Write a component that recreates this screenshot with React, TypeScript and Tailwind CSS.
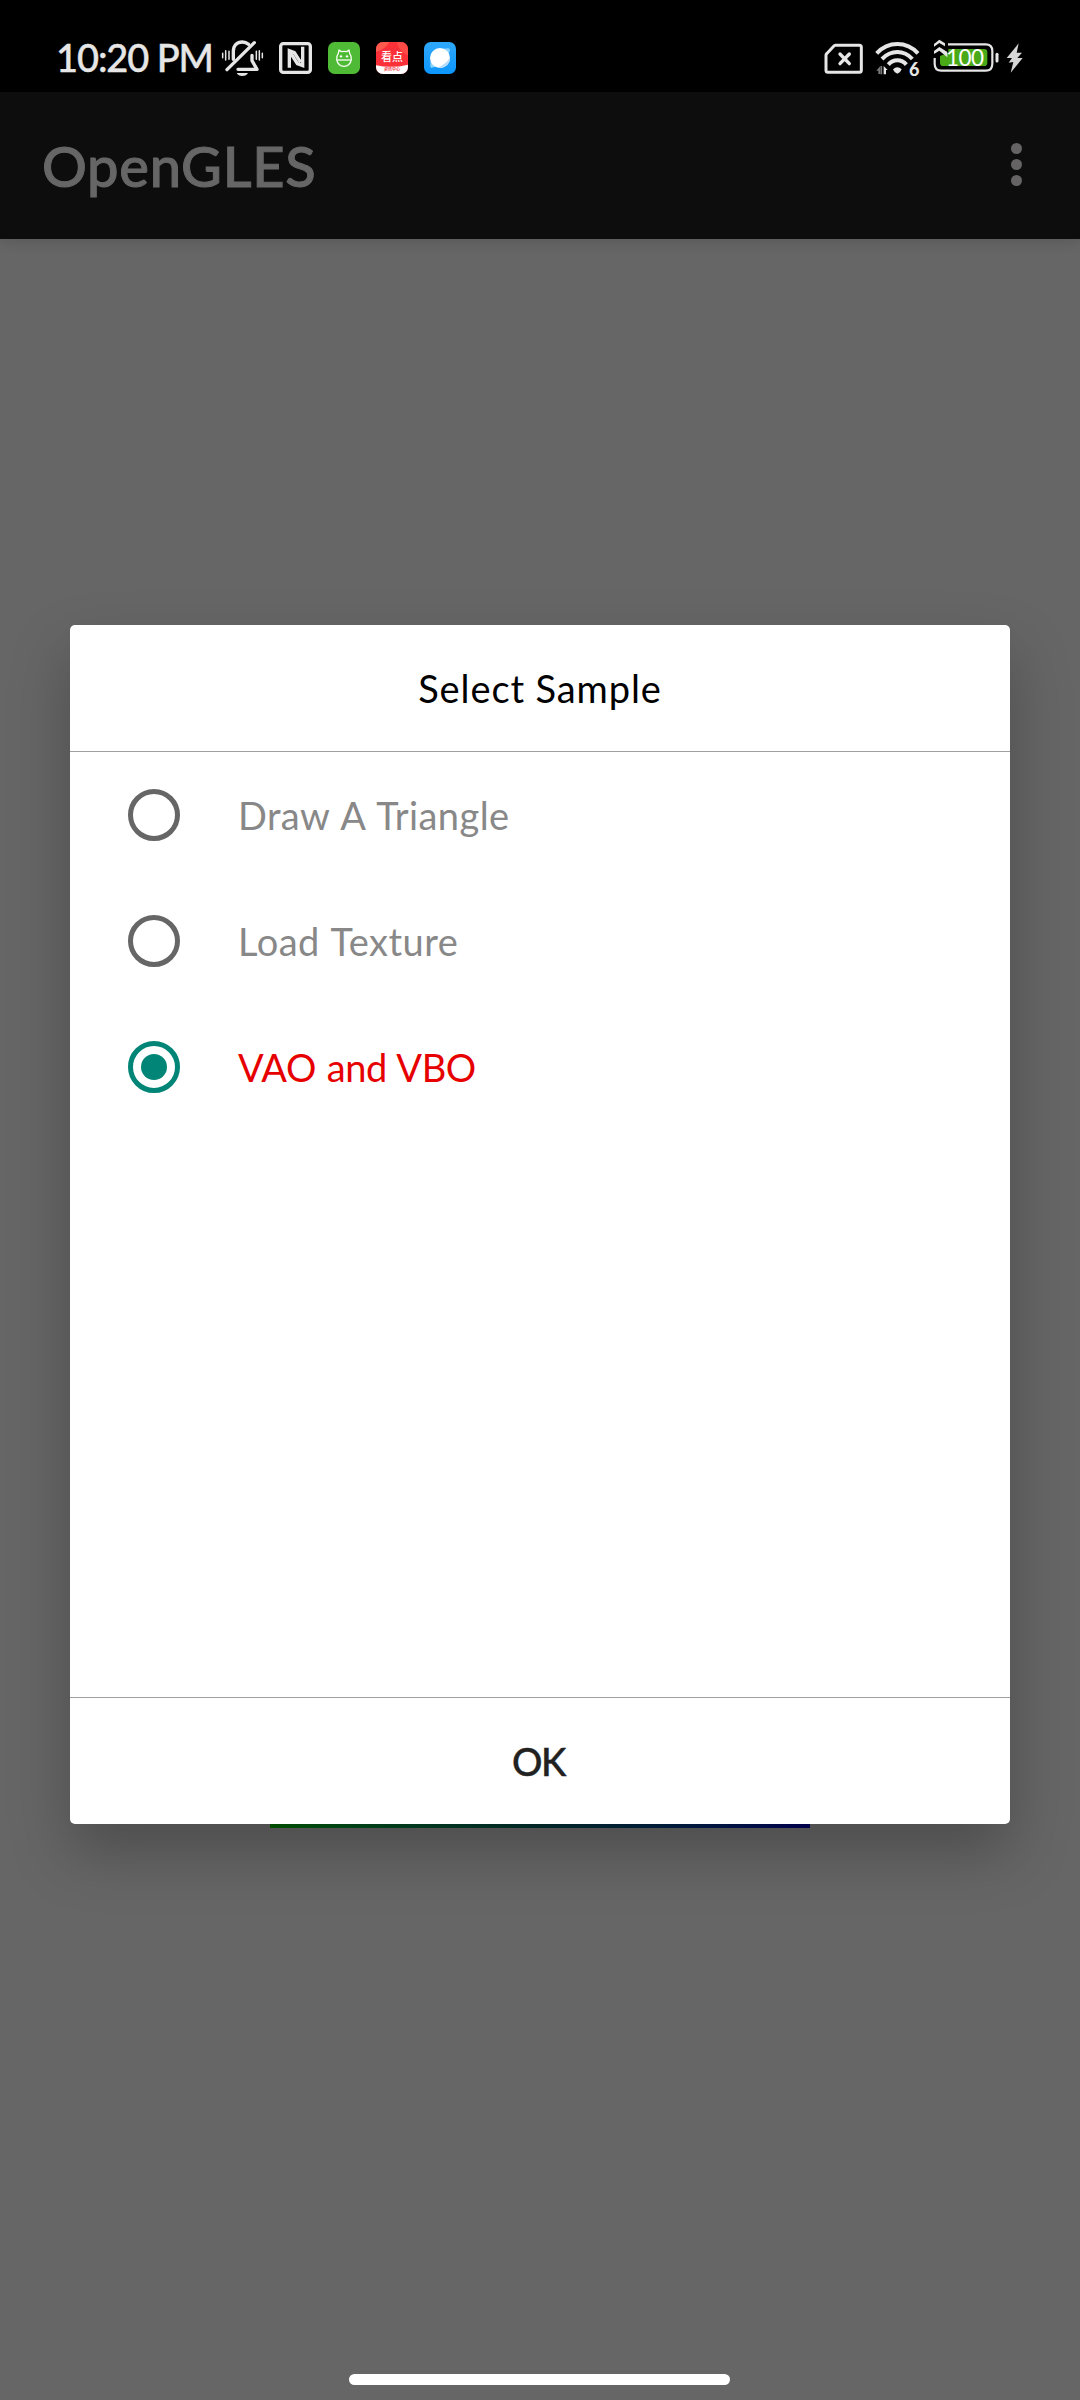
const samples = [
  { label: 'Draw A Triangle', checked: false, text: 'tracking-[0.4px] [word-spacing:2px] text-[#888888]' },
  { label: 'Load Texture', checked: false, text: 'tracking-[0.5px] [word-spacing:1.500px] text-[#888888]' },
  { label: 'VAO and VBO', checked: true, text: 'tracking-[-0.4px] [word-spacing:1.500px] text-[#e60000]' },
];

function BellOffIcon() {
  return (
    <svg className="mt-1 h-[60px] w-[45px]" viewBox="30 0 135 180" fill="none" stroke="#e6e6e6" strokeWidth="10" strokeLinecap="round" strokeLinejoin="round">
      <path d="M70 88V64C70 46 81 36 97 36c8 0 14 3 19 7" />
      <path d="M126 76v16l15 26H84" />
      <path d="M51 119L133 38" />
      <path d="M80 129h34c-3 6-9 9-17 9s-14-3-17-9z" fill="#e6e6e6" stroke="none" />
      <path d="M38 70v13M47 62v28M57 64v24M139 64v24M148 62v28M157 70v13" strokeWidth="4.500" />
    </svg>
  );
}

function NfcIcon() {
  return (
    <svg className="mt-1 ml-[14px] h-[60px] w-[33px]" viewBox="207 0 99 180" fill="none" stroke="#e6e6e6" strokeWidth="10">
      <rect x="212" y="41" width="89" height="86" rx="8" />
      <path d="M238 113V62L253 68L272 97" strokeLinejoin="miter" />
      <path d="M278 50V107L262 101L242 69" strokeLinejoin="miter" />
    </svg>
  );
}

function CatAppIcon() {
  return (
    <svg className="ml-4 h-8 w-8" viewBox="0 0 96 96" fill="none" stroke="#f2ffed" strokeWidth="4">
      <rect width="96" height="96" rx="20" fill="#4fba35" stroke="none" />
      <path d="M31 34L33 24L40 29Q48 27 56 29L63 24L65 34Q71 42 70 53Q66 73 48 73T26 53Q25 42 31 34z" strokeLinejoin="round" />
      <path d="M26 54H70" />
      <circle cx="39" cy="43" r="3.500" fill="#fff" stroke="none" />
      <circle cx="57" cy="43" r="3.500" fill="#fff" stroke="none" />
    </svg>
  );
}

function NewsAppIcon() {
  return (
    <div className="relative ml-4 flex h-8 w-8 flex-col items-center overflow-hidden rounded-[7px] bg-[#fb3038]">
      <svg className="absolute inset-0 h-8 w-8" viewBox="0 0 96 96">
        <path d="M0 0H40Q30 20 0 30z" fill="#ff5a4e" />
        <path d="M96 0V40Q70 30 62 0z" fill="#ff4a45" />
        <path d="M0 70Q48 80 96 68V96H0z" fill="#fff" />
      </svg>
      <span className="relative mt-[8px] font-['Noto_Sans_CJK_SC',sans-serif] text-[11px] leading-[12px] font-medium text-white">看点</span>
      <span className="relative mt-[4px] font-['Noto_Sans_CJK_SC',sans-serif] text-[4px] leading-[6px] font-bold whitespace-nowrap text-[#f0404a]">资讯中心</span>
    </div>
  );
}

function BrowserAppIcon() {
  return (
    <svg className="ml-4 h-8 w-8" viewBox="0 0 96 96">
      <defs>
        <linearGradient id="sky" x1="0" y1="0" x2="0" y2="1">
          <stop offset="0" stopColor="#2fa8fb" />
          <stop offset="1" stopColor="#0c96ff" />
        </linearGradient>
      </defs>
      <rect width="96" height="96" rx="20" fill="url(#sky)" />
      <path d="M58 20Q74 17 77 20T72 40zM20 58Q17 75 21 77T40 72z" fill="#8ad4ff" />
      <circle cx="48" cy="48" r="30" fill="#fff" />
      <path d="M78 46A30 30 0 0 1 40 77Q66 68 78 46z" fill="#b9dcfb" />
    </svg>
  );
}

function NoSimIcon() {
  return (
    <svg className="h-[60px] w-[39px]" viewBox="42 0 117 180" fill="none" stroke="#e6e6e6" strokeWidth="9" strokeLinejoin="round">
      <path d="M76 46H148Q154 46 154 52V121Q154 127 148 127H54Q48 127 48 121V76Q48 73 50 71L71 49Q73 46 76 46z" />
      <path d="M90 72L118 101M118 72L90 101" strokeWidth="10" strokeLinecap="round" />
    </svg>
  );
}

function WifiIcon() {
  return (
    <div className="relative ml-[12px] h-[60px] w-[45px]">
      <svg className="h-[60px] w-[45px]" viewBox="197 0 135 180" fill="none" stroke="#e6e6e6" strokeWidth="12">
        <path d="M202 70Q228 42 264 42T326 70" />
        <path d="M218 87Q238 66 264 66T309 87" />
        <path d="M237 104Q248 91 264 91T291 104" />
        <path d="M251 118Q264 106 277 118Q275 126 264 131Q253 126 251 118z" fill="#e6e6e6" stroke="none" />
        <path d="M213 108V132H207V122H201z" fill="#777" stroke="none" />
        <path d="M223 133V108L235 120H230V133z" fill="#e6e6e6" stroke="none" />
        <path d="M216 108V133" stroke="#777" strokeWidth="5" />
      </svg>
      <span className="absolute top-[29px] left-[34px] font-['Lato',sans-serif] text-[18px] leading-[20px] font-black text-[#e6e6e6] [text-shadow:-1px_-1px_0_#000]">6</span>
    </div>
  );
}

function BatteryIcon() {
  return (
    <div className="relative ml-[12px] h-[60px] w-[68px]">
      <svg className="h-[60px] w-[68px]" viewBox="36 0 204 180" fill="none" stroke="#e6e6e6">
        <path d="M84 43H197Q217 43 217 63V101Q217 122 197 122H64Q44 122 44 102V84" strokeWidth="6.500" />
        <path d="M60 78L85 68V57H192Q202 57 202 67V98Q202 108 192 108H70Q60 108 60 98z" fill="#49a916" stroke="none" />
        <path d="M42 42L58 29L75 40V49L58 39L42 50z" fill="#e6e6e6" stroke="none" />
        <path d="M42 63L58 51L82 66V82L58 62L42 72z" fill="#e6e6e6" stroke="none" />
        <path d="M231 73V93" strokeWidth="9" strokeLinecap="round" />
      </svg>
      <span className="absolute top-[14.500px] left-[14px] w-[37px] text-center font-['Lato',sans-serif] text-[22.500px] leading-[26px] tracking-[-0.600px] text-white">100</span>
    </div>
  );
}

function ChargingIcon() {
  return (
    <svg className="ml-[6px] h-[60px] w-[18px]" viewBox="258 0 54 180" fill="#d6d6d6">
      <path d="M296 40L260 84H276L266 98L280 96L272 128L308 84H292L306 68H290z" />
    </svg>
  );
}

function StatusBar() {
  return (
    <div className="flex h-[92px] justify-between bg-black pr-[56px] pl-[56px]">
      <div className="flex items-center pt-[24px]">
        <span className="mb-[2px] w-[164px] font-['Lato',sans-serif] text-[38px] leading-[60px] font-medium tracking-[-1.100px] whitespace-nowrap text-[#e6e6e6] [-webkit-text-stroke:0.400px_#e6e6e6]">10:20 PM</span>
        <BellOffIcon />
        <NfcIcon />
        <CatAppIcon />
        <NewsAppIcon />
        <BrowserAppIcon />
      </div>
      <div className="flex items-center pt-[28px]">
        <NoSimIcon />
        <WifiIcon />
        <BatteryIcon />
        <ChargingIcon />
      </div>
    </div>
  );
}

function Radio({ checked }: { checked: boolean }) {
  return checked ? (
    <span className="flex h-[52px] w-[52px] items-center justify-center rounded-full border-[5px] border-[#008577]">
      <span className="h-[26px] w-[26px] rounded-full bg-[#008577]" />
    </span>
  ) : (
    <span className="h-[52px] w-[52px] rounded-full border-[5px] border-[#666666]" />
  );
}

export default function App() {
  return (
    <div className="flex h-[2400px] w-[1080px] flex-col overflow-hidden bg-[#666666] font-['Lato',sans-serif]">
      <StatusBar />
      <header className="flex h-[147px] shrink-0 items-center justify-between bg-[#0d0d0d] pr-[58px] pl-[42px] shadow-[0_4px_12px_rgba(0,0,0,0.12)]">
        <h1 className="text-[56px] leading-[72px] font-medium tracking-[0.700px] text-[#666666] [-webkit-text-stroke:1px_#666666]">OpenGLES</h1>
        <div className="flex flex-col gap-[5px] pb-[3px]">
          <span className="h-[11px] w-[11px] rounded-full bg-[#666364]" />
          <span className="h-[11px] w-[11px] rounded-full bg-[#666364]" />
          <span className="h-[11px] w-[11px] rounded-full bg-[#666364]" />
        </div>
      </header>
      <main className="flex flex-1 flex-col items-center pt-[386px]">
        <section className="relative z-10 flex h-[1199px] w-[940px] flex-col rounded-[5px] bg-white shadow-[0_28px_60px_rgba(0,0,0,0.25)]">
          <h2 className="h-[127px] border-b border-[#a0a0a0] text-center text-[38px] leading-[126px] tracking-[0.900px] text-black">Select Sample</h2>
          <ul className="flex-1">
            {samples.map((s) => (
              <li key={s.label} className="flex h-[126px] items-center gap-[58px] pl-[58px]">
                <Radio checked={s.checked} />
                <span className={`text-[38px] leading-[60px] ${s.text}`}>{s.label}</span>
              </li>
            ))}
          </ul>
          <button className="h-[127px] border-t border-[#a0a0a0] pr-[3px] text-center text-[38px] leading-[126px] font-medium tracking-[-1.500px] text-[#212121] [-webkit-text-stroke:0.400px_#212121]">OK</button>
        </section>
        <div className="relative z-20 h-[4px] w-[540px] bg-linear-to-r from-[#004d00] via-[#002626] to-[#00004d]" />
        <div className="mt-auto mr-[2px] mb-[15px] h-[11px] w-[381px] rounded-full bg-white" />
      </main>
    </div>
  );
}
